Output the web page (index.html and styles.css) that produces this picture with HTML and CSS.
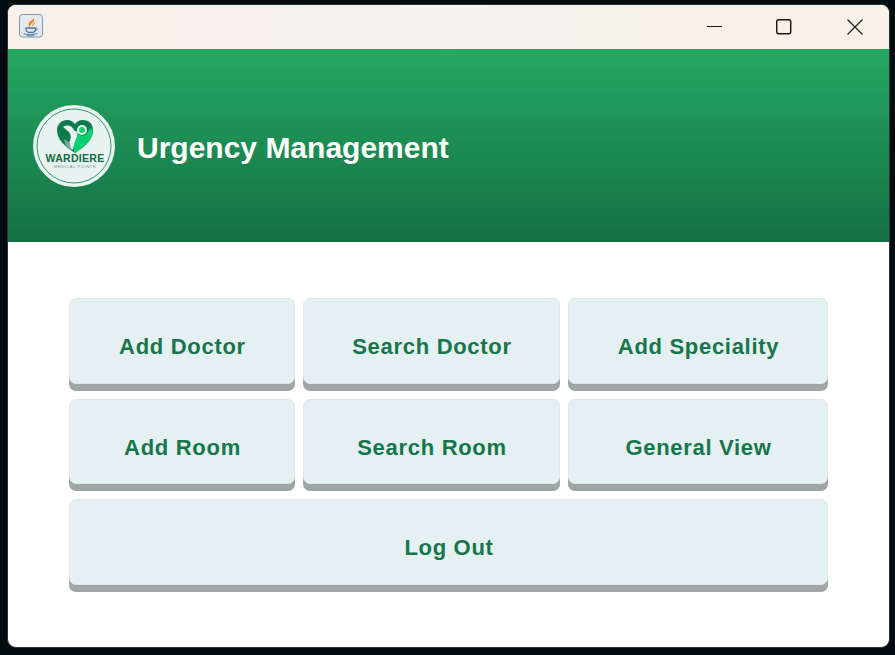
FILE: index.html
```html
<!DOCTYPE html>
<html lang="en">
<head>
    <meta charset="UTF-8">
    <meta name="viewport" content="width=device-width, initial-scale=1.0">
    <title>Urgency Management</title>
    <link rel="stylesheet" href="styles.css">
</head>
<body>
    <div class="window">
        <div class="titlebar">
            <div class="app-icon">
                <svg width="24" height="24" viewBox="0 0 24 24">
                    <rect x="0.5" y="0.5" width="23" height="22.5" rx="3" fill="#e6eaee" stroke="#7d9ab5"/>
                    <path d="M14.5 3.5 C15 6 10 7 9.5 10 C9.3 11.5 10.5 13 11.5 13.5 C10.5 11 12.5 10 14 8.5 C15.5 7 15.5 5 14.5 3.5 Z" fill="#ee8a2a"/>
                    <path d="M16.5 7.5 C14.5 9 12.5 10.5 13.5 13 C14 11.5 16 10.5 16.5 7.5 Z" fill="#f4a553"/>
                    <path d="M7 14 H16.5 V15.5 C16.5 17.5 14.5 18.5 11.7 18.5 C9 18.5 7 17.5 7 15.5 Z" fill="#dfe6ec" stroke="#56789a" stroke-width="1.3"/>
                    <path d="M16.5 14.2 C19 13.8 19 16.2 16 16.8" fill="none" stroke="#56789a" stroke-width="1"/>
                    <path d="M4.5 19.8 C9 20.8 14 20.8 18.5 19.5 M8 21.5 C10 22 13 22 15 21.5" fill="none" stroke="#56789a" stroke-width="1"/>
                </svg>
            </div>
            <div class="window-controls">
                <svg class="win-btn" width="16" height="16" viewBox="0 0 16 16"><path d="M0 7.5 H15" stroke="#1a1a1a" fill="none"/></svg>
                <svg class="win-btn win-btn-max" width="16" height="16" viewBox="0 0 16 16"><rect x="0.7" y="0.7" width="14" height="14" rx="2" stroke="#1a1a1a" stroke-width="1.5" fill="none"/></svg>
                <svg class="win-btn" width="16" height="16" viewBox="0 0 16 16"><path d="M0.5 0.5 L15.5 15.5 M15.5 0.5 L0.5 15.5" stroke="#1a1a1a" stroke-width="1.2" fill="none"/></svg>
            </div>
        </div>

        <div class="header">
            <svg class="logo" width="82" height="82" viewBox="0 0 82 82">
                <circle cx="41" cy="41" r="41" fill="#e8f2f0"/>
                <circle cx="41" cy="41" r="37" fill="none" stroke="#2f9a68" stroke-width="1"/>
                <path d="M42 48 C31 41 24 34 24 25 C24 19 29 15 34 15 C38 15 40.5 17 42 19 C43.5 17 46 15 50 15 C56 15 60 19 60 25 C60 34 53 41 42 48 Z" fill="#0f7a4a"/>
                <path d="M42 48 C39 44 41 38 43 33 C44 30 46 28 49 31 C52 31 55 28 57 23 C59 24 60 25 60 27 C59 35 52 42 42 48 Z" fill="#08d06f"/>
                <path d="M30 22 C35 19 39 21 41 25 C43 27 44 27 44 25 C46 29 43 33 42 37 C41 40 40 42 40 45 C38 44 36 42 34 40 C38 36 39 31 36 27 C34 25 32 24 30 22 Z" fill="#e8f2f0"/>
                <circle cx="49" cy="25" r="5" fill="#e8f2f0"/>
                <circle cx="49" cy="25" r="3" fill="#08d06f"/>
                <path d="M31 34 L37 38 L38 45 L33 41 Z" fill="#7fa999"/>
                <text class="logo-name" x="42" y="57" text-anchor="middle">WARDIERE</text>
                <text class="logo-sub" x="42" y="63" text-anchor="middle">MEDICAL POINTS</text>
            </svg>
            <h1 class="header-title">Urgency Management</h1>
        </div>

        <div class="content">
            <div class="menu">
                <button class="menu-btn">Add Doctor</button>
                <button class="menu-btn">Search Doctor</button>
                <button class="menu-btn">Add Speciality</button>
                <button class="menu-btn">Add Room</button>
                <button class="menu-btn">Search Room</button>
                <button class="menu-btn">General View</button>
                <button class="menu-btn menu-btn-wide">Log Out</button>
            </div>
        </div>
    </div>
</body>
</html>
```

FILE: styles.css
```css
* {
    margin: 0;
    padding: 0;
    box-sizing: border-box;
}

body {
    font-family: "Liberation Sans", Arial, sans-serif;
    background: #020c0e;
    width: 895px;
    height: 655px;
    padding: 4px 5px 7px 7px;
    overflow: hidden;
}

.window {
    height: 100%;
    border: 1px solid #2c3538;
    border-radius: 9px;
    overflow: hidden;
    background: #fff;
    display: flex;
    flex-direction: column;
}

.titlebar {
    height: 44px;
    flex: none;
    background: linear-gradient(90deg, #f8f0e9 0%, #f4f3ec 50%, #f8f1e8 100%);
    display: flex;
    justify-content: space-between;
    align-items: center;
    padding: 0 26px 0 11px;
}

.app-icon {
    display: flex;
    margin-bottom: 2px;
}

.window-controls {
    display: flex;
    gap: 53px;
    margin-bottom: 1px;
}

.win-btn {
    display: block;
}

.win-btn-max {
    margin-right: 2px;
}

.header {
    height: 193px;
    flex: none;
    background: linear-gradient(180deg, #24a862 0%, #156f44 100%);
    display: flex;
    align-items: center;
    gap: 22px;
    padding: 1px 0 0 25px;
}

.logo {
    flex: none;
}

.logo-name {
    font-size: 10.5px;
    font-weight: bold;
    letter-spacing: 0.3px;
    fill: #0f6b42;
}

.logo-sub {
    font-size: 4px;
    letter-spacing: 0.6px;
    fill: #5d9a80;
}

.header-title {
    font-size: 30px;
    font-weight: bold;
    color: #fff;
    margin-top: 4px;
}

.content {
    flex: 1;
    padding: 56px 61px 0;
}

.menu {
    display: grid;
    grid-template-columns: 226px 257px 260px;
    grid-auto-rows: 92.5px;
    gap: 8px;
}

.menu-btn {
    font-family: inherit;
    font-size: 22px;
    font-weight: bold;
    letter-spacing: 0.7px;
    color: #16754a;
    background: #e5f0f2;
    border: 1px solid #dce8ea;
    border-radius: 7px;
    box-shadow: 0 7px 0 #9fa6a7;
    margin-bottom: 7px;
    padding: 13px 0 0 1px;
    cursor: pointer;
}

.menu-btn-wide {
    grid-column: span 3;
}
```
